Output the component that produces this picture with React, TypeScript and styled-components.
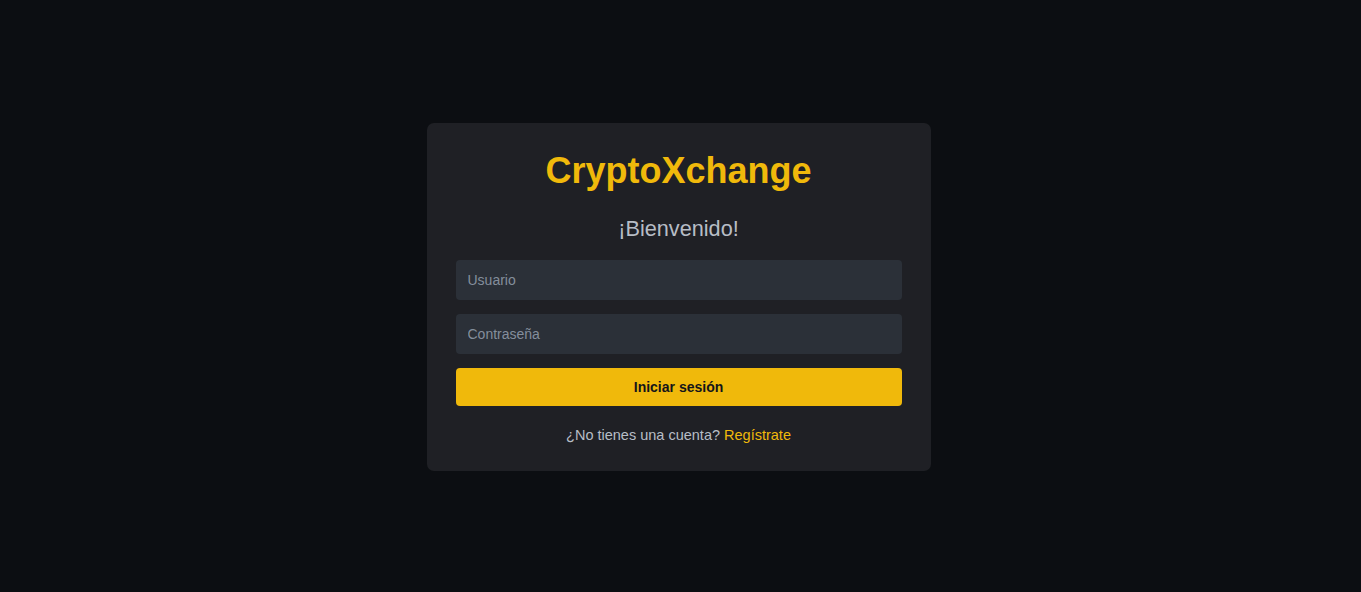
import * as React from "react";
import styled, { createGlobalStyle } from "styled-components";

const GlobalStyle = createGlobalStyle`
  html, body {
    margin: 0;
    padding: 0;
    background: #0c0e12;
    font-family: "Liberation Sans", Arial, sans-serif;
  }
`;

const Page = styled.div`
  height: 592px;
  display: flex;
  align-items: center;
  justify-content: center;
`;

const Card = styled.div`
  box-sizing: border-box;
  width: 504px;
  height: 348px;
  margin: 2px 0 0 -4px;
  padding: 30px 29px 24px;
  background: #1f2025;
  border-radius: 7px;
  display: flex;
  flex-direction: column;
  align-items: stretch;
`;

const Brand = styled.h1`
  margin: 0;
  font-size: 36px;
  line-height: 36px;
  font-weight: 700;
  text-align: center;
  color: #f0b90b;
`;

const Welcome = styled.h2`
  margin: 28px 0 19px;
  font-size: 21.7px;
  line-height: 24px;
  font-weight: 400;
  text-align: center;
  color: #b7bdc6;
`;

const Form = styled.form`
  display: flex;
  flex-direction: column;
  gap: 14px;
  margin: 0;
`;

const Field = styled.input`
  box-sizing: border-box;
  height: 40px;
  padding: 0 12px;
  border: none;
  border-radius: 4px;
  background: #2b3038;
  color: #eaecef;
  font-family: inherit;
  font-size: 14px;
  outline: none;

  &::placeholder {
    color: #848e9c;
  }
`;

const Submit = styled.button`
  height: 38px;
  border: none;
  border-radius: 4px;
  background: #f0b90b;
  color: #14151a;
  font-family: inherit;
  font-size: 14px;
  font-weight: 700;
  cursor: pointer;
`;

const Footer = styled.p`
  margin: 21px 0 0;
  font-size: 14.5px;
  line-height: 16px;
  text-align: center;
  color: #b7bdc6;
`;

const Link = styled.a`
  color: #f0b90b;
  text-decoration: none;
`;

export default function App() {
  return (
    <>
      <GlobalStyle />
      <Page>
        <Card>
          <Brand>CryptoXchange</Brand>
          <Welcome>¡Bienvenido!</Welcome>
          <Form onSubmit={(e) => e.preventDefault()}>
            <Field type="text" placeholder="Usuario" />
            <Field type="password" placeholder="Contraseña" />
            <Submit type="submit">Iniciar sesión</Submit>
          </Form>
          <Footer>
            ¿No tienes una cuenta? <Link href="#">Regístrate</Link>
          </Footer>
        </Card>
      </Page>
    </>
  );
}
